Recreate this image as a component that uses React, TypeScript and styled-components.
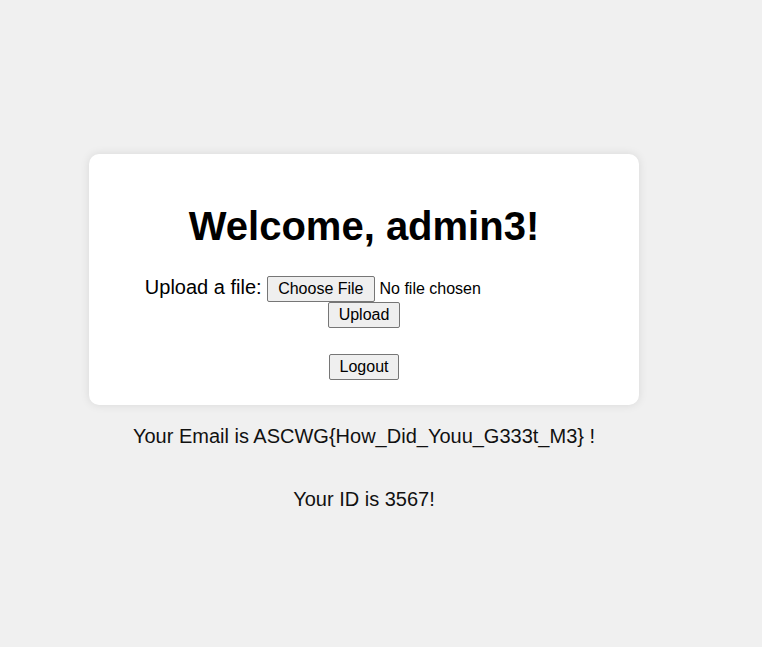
import React from "react";
import styled, { createGlobalStyle } from "styled-components";

const Global = createGlobalStyle`
  html, body { margin: 0; padding: 0; background: #f0f0f0; }
  body { font-family: "Liberation Sans", Arial, sans-serif; color: #000; }
`;

const Page = styled.div`
  width: 728px;
  display: flex;
  flex-direction: column;
  align-items: center;
  padding-top: 154px;
  font-size: 20px;
`;

const Card = styled.div`
  width: 550px;
  box-sizing: border-box;
  background: #fff;
  border-radius: 10px;
  box-shadow: 0 0 10px rgba(0, 0, 0, 0.1);
  padding: 20px 20px 25px;
  text-align: center;
`;

const Title = styled.h1`
  font-size: 40px;
  font-weight: bold;
  margin: 30px 0 27px;
`;

const Form = styled.form`
  margin: 0;
`;

const FileInput = styled.input`
  font-family: "Liberation Sans", Arial, sans-serif;
  font-size: 16px;
  width: 316px;
  &::file-selector-button {
    font-family: "Liberation Sans", Arial, sans-serif;
    font-size: 16px;
    padding: 3px 10px;
    margin-right: 5px;
    background: #efefef;
    border: 1px solid #767676;
    border-radius: 2px;
    color: #000;
  }
`;

const Button = styled.button<{ $gap?: number }>`
  font-family: "Liberation Sans", Arial, sans-serif;
  font-size: 16px;
  padding: 3px 10px;
  margin-top: ${(p) => p.$gap ?? 0}px;
  background: #efefef;
  border: 1px solid #767676;
  border-radius: 2px;
  color: #000;
`;

const Info = styled.p`
  margin: 20px 0;
  text-align: center;
  color: #111;
`;

export default function App() {
  return (
    <>
      <Global />
      <Page>
        <Card>
          <Title>Welcome, admin3!</Title>
          <Form onSubmit={(e) => e.preventDefault()}>
            <label>
              Upload a file: <FileInput type="file" />
            </label>
            <br />
            <Button type="submit">Upload</Button>
          </Form>
          <br />
          <Button type="button" $gap={3}>
            Logout
          </Button>
        </Card>
        <Info>Your Email is ASCWG{"{"}How_Did_Youu_G333t_M3{"}"} !</Info>
        <Info>Your ID is 3567!</Info>
      </Page>
    </>
  );
}
